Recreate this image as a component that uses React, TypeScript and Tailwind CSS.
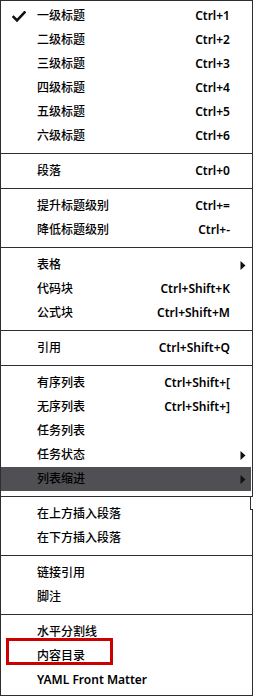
import React from "react";

type Item = { label: string; shortcut?: string; arrow?: boolean; checked?: boolean; active?: boolean; boxed?: boolean };
type Entry = Item | "sep";

const entries: Entry[] = [
  { label: "一级标题", shortcut: "Ctrl+1", checked: true },
  { label: "二级标题", shortcut: "Ctrl+2" },
  { label: "三级标题", shortcut: "Ctrl+3" },
  { label: "四级标题", shortcut: "Ctrl+4" },
  { label: "五级标题", shortcut: "Ctrl+5" },
  { label: "六级标题", shortcut: "Ctrl+6" },
  "sep",
  { label: "段落", shortcut: "Ctrl+0" },
  "sep",
  { label: "提升标题级别", shortcut: "Ctrl+=" },
  { label: "降低标题级别", shortcut: "Ctrl+-" },
  "sep",
  { label: "表格", arrow: true },
  { label: "代码块", shortcut: "Ctrl+Shift+K" },
  { label: "公式块", shortcut: "Ctrl+Shift+M" },
  "sep",
  { label: "引用", shortcut: "Ctrl+Shift+Q" },
  "sep",
  { label: "有序列表", shortcut: "Ctrl+Shift+[" },
  { label: "无序列表", shortcut: "Ctrl+Shift+]" },
  { label: "任务列表" },
  { label: "任务状态", arrow: true },
  { label: "列表缩进", arrow: true, active: true },
  "sep",
  { label: "在上方插入段落" },
  { label: "在下方插入段落" },
  "sep",
  { label: "链接引用" },
  { label: "脚注" },
  "sep",
  { label: "水平分割线" },
  { label: "内容目录", boxed: true },
  { label: "YAML Front Matter" },
];

function Check() {
  return (
    <svg width="14" height="12" viewBox="0 0 14 12" className="mt-[1px]">
      <path d="M1.5 6 L5 9.5 L12.5 1.5" fill="none" stroke="#111" strokeWidth="2.6" strokeLinecap="square" strokeLinejoin="miter" />
    </svg>
  );
}

function Arrow() {
  return (
    <svg width="6" height="9" viewBox="0 0 6 9">
      <path d="M0.5 0 L5.5 4.5 L0.5 9 Z" fill="#111" />
    </svg>
  );
}

export default function App() {
  return (
    <div className="w-[254px] h-[696px] bg-white">
      <div
        className="relative w-[253px] border border-[#2e2e30] bg-white py-[3px] text-[12px] text-black"
        style={{ fontFamily: '"Noto Sans", "Noto Sans CJK SC", sans-serif' }}
      >
        {entries.map((e, i) =>
          e === "sep" ? (
            <div key={i} className="h-[11px] flex items-center">
              <div className="h-px w-full bg-[#2e2e30]" />
            </div>
          ) : (
            <div
              key={i}
              className={`relative h-[24px] flex items-center pl-[11px] font-medium ${
                e.active ? "bg-[#505054] mr-px pr-[5px]" : "pr-[6px]"
              }`}
            >
              <div className="w-[25px] flex items-center">{e.checked && <Check />}</div>
              <span className={`flex-1 leading-none ${/^[A-Z]/.test(e.label) ? "font-semibold" : ""}`}>{e.label}</span>
              {e.shortcut && <span className="leading-none font-semibold">{e.shortcut}</span>}
              <div className="w-[6px] ml-[10px] flex items-center">{e.arrow && <Arrow />}</div>
              {e.boxed && (
                <div className="absolute left-[5px] top-[-6px] w-[107px] h-[27px] border-[3px] border-[#cc0000]" />
              )}
            </div>
          )
        )}
        <div className="absolute right-[-1px] top-[496px] w-[3px] h-[13px] bg-white border-l border-b border-[#2e2e30]" />
      </div>
    </div>
  );
}
